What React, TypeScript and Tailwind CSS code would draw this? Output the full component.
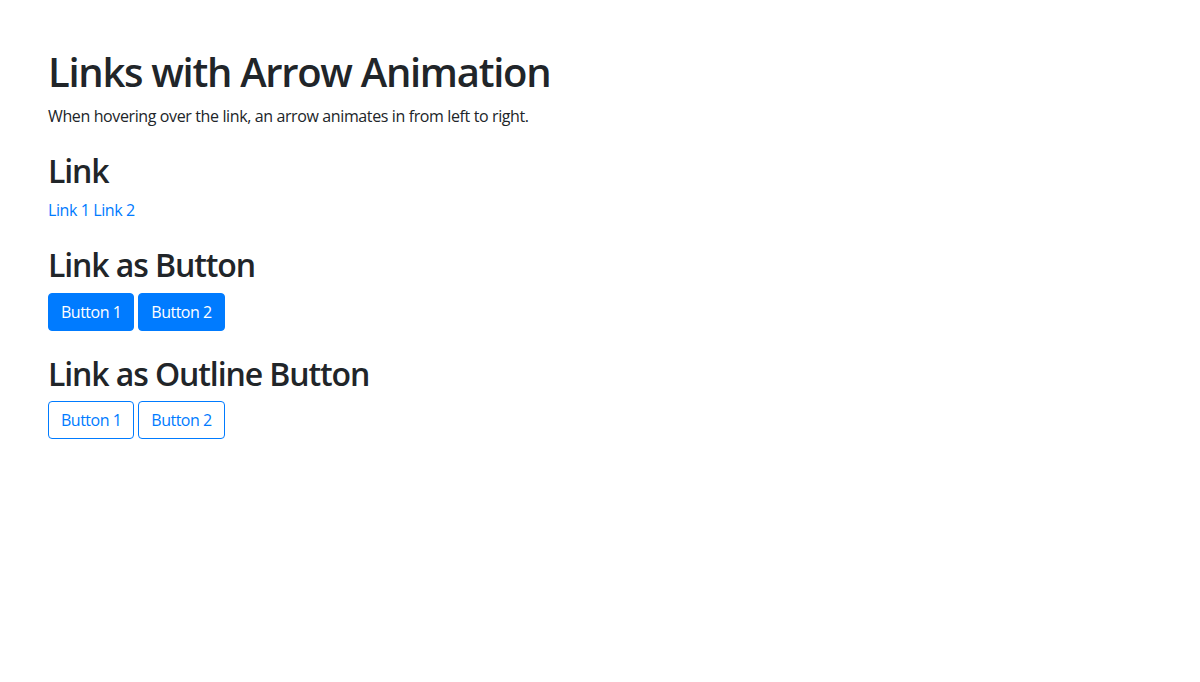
import React from "react";

export default function App() {
  return (
    <div className="bg-white min-h-[682px] text-[#212529] px-12 pt-12 font-['Open_Sans',sans-serif]">
      <h1 className="text-[40px] leading-[1.2] font-semibold mb-2 tracking-[-1.3px]">Links with Arrow Animation</h1>
      <p className="text-base leading-6 tracking-[-0.38px]">When hovering over the link, an arrow animates in from left to right.</p>

      <h2 className="mt-6 text-[32px] leading-[1.2] font-semibold mb-2 tracking-[-1.1px]">Link</h2>
      <div className="text-base leading-6 tracking-[-0.4px]">
        <a href="#" className="text-[#007bff]">Link 1</a>{" "}
        <a href="#" className="text-[#007bff]">Link 2</a>
      </div>

      <h2 className="mt-6 text-[32px] leading-[1.2] font-semibold mb-2 tracking-[-1.1px]">Link as Button</h2>
      <div className="flex gap-1">
        <a href="#" className="inline-block px-3 py-1.5 text-base leading-6 bg-[#007bff] border border-[#007bff] text-white rounded tracking-[-0.5px]">Button 1</a>
        <a href="#" className="inline-block px-3 py-1.5 text-base leading-6 bg-[#007bff] border border-[#007bff] text-white rounded tracking-[-0.5px]">Button 2</a>
      </div>

      <h2 className="mt-6 text-[32px] leading-[1.2] font-semibold mb-2 tracking-[-1.1px]">Link as Outline Button</h2>
      <div className="flex gap-1">
        <a href="#" className="inline-block px-3 py-1.5 text-base leading-6 border border-[#007bff] text-[#007bff] rounded tracking-[-0.5px]">Button 1</a>
        <a href="#" className="inline-block px-3 py-1.5 text-base leading-6 border border-[#007bff] text-[#007bff] rounded tracking-[-0.5px]">Button 2</a>
      </div>
    </div>
  );
}
